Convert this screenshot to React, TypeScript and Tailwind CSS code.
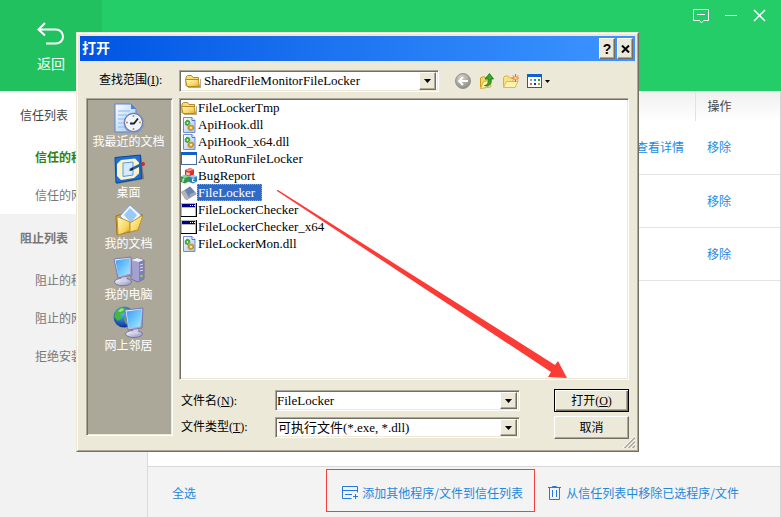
import type { ReactNode } from 'react';

const raised =
  'border border-t-white border-l-white border-r-[#716f64] border-b-[#716f64] bg-[#ece9d8] shadow-[inset_-1px_-1px_#aca899]';
const sunken =
  'border border-t-[#aca899] border-l-[#aca899] border-r-white border-b-white shadow-[inset_1px_1px_#716f64,inset_-1px_-1px_#ece9d8]';
const dialogText = "font-['Liberation_Serif','Noto_Sans_CJK_SC',serif] text-black";

function Defs() {
  return (
    <svg width="0" height="0" className="absolute" aria-hidden="true">
      <defs>
        <linearGradient id="folder" x1="0" y1="0" x2="1" y2="1">
          <stop offset="0" stopColor="#fffbc4" />
          <stop offset="0.6" stopColor="#f9d866" />
          <stop offset="1" stopColor="#d9a32c" />
        </linearGradient>
        <linearGradient id="screen" x1="0" y1="0" x2="1" y2="1">
          <stop offset="0" stopColor="#3d9bf5" />
          <stop offset="0.5" stopColor="#6cc4ff" />
          <stop offset="1" stopColor="#a9ecff" />
        </linearGradient>
        <linearGradient id="shell" x1="0" y1="0" x2="1" y2="1">
          <stop offset="0" stopColor="#ffffff" />
          <stop offset="1" stopColor="#8f8fc4" />
        </linearGradient>
        <linearGradient id="paper" x1="0" y1="0" x2="1" y2="1">
          <stop offset="0" stopColor="#ffffff" />
          <stop offset="1" stopColor="#9cc6f6" />
        </linearGradient>
        <radialGradient id="globe" cx="0.4" cy="0.3" r="0.7">
          <stop offset="0" stopColor="#5fb8ff" />
          <stop offset="1" stopColor="#0a2f9c" />
        </radialGradient>
        <radialGradient id="grayball" cx="0.4" cy="0.3" r="0.7">
          <stop offset="0" stopColor="#d6d5cf" />
          <stop offset="1" stopColor="#8d8c86" />
        </radialGradient>
      </defs>
    </svg>
  );
}

function Svg({ size, children }: { size: 16 | 32; children: ReactNode }) {
  return (
    <svg width={size} height={size} viewBox={`0 0 ${size} ${size}`} className="shrink-0" aria-hidden="true">
      {children}
    </svg>
  );
}

const FolderIcon = () => (
  <Svg size={16}>
    <path d="M1 13V4l1.500-1.500h4L8 4.500h5.500V7" fill="#f8dd7c" stroke="#b98b1e" />
    <path d="M.5 6.500h12.500l1.500 7H2z" fill="url(#folder)" stroke="#b98b1e" />
    <path d="M15.500 6v8.500H3" fill="none" stroke="#6b5a2a" strokeOpacity=".5" />
  </Svg>
);

const DllIcon = () => (
  <Svg size={16}>
    <path d="M2.500.5h8.500l3 3v12H2.500z" fill="url(#paper)" stroke="#6f8fd0" />
    <path d="M11 .5v3h3" fill="#fff" stroke="#4e73c4" />
    <path d="M4 5l2-2 2.500 1L9 6.500 7 8.500 4.500 8z" fill="#45ab35" stroke="#2d8a22" strokeWidth=".6" />
    <circle cx="6.500" cy="6" r=".9" fill="#d9f5c4" />
    <path d="M7 9.500l2-1.500 3 .5 1 2.500-1.500 2-3 .5L7 12z" fill="#d9a02c" stroke="#a9751a" strokeWidth=".6" />
    <circle cx="10" cy="10.800" r="1.100" fill="#fff0b8" />
  </Svg>
);

const WindowIcon = () => (
  <Svg size={16}>
    <rect x=".5" y="1.500" width="15" height="12" fill="#fff" stroke="#456a9c" />
    <rect x="0" y="1" width="16" height="3" fill="#1360c9" />
  </Svg>
);

const ConsoleIcon = () => (
  <Svg size={16}>
    <rect x="0" y="1" width="16" height="14" fill="#000" />
    <rect x="0" y="1" width="15" height="13" fill="#b8b8b8" />
    <rect x="1" y="2" width="13" height="3" fill="#000084" />
    <path d="M9 3h1v1H9zM11 3h1v1h-1zM13 3h1v1h-1z" fill="#fff" />
    <rect x="1" y="6" width="13" height="8" fill="#fff" />
  </Svg>
);

const BlocksIcon = () => (
  <Svg size={16}>
    <path d="M4 2l5-2 4 1.500v5L8 8.500 4 7z" fill="#d92f2f" />
    <path d="M4 2l5-2 4 1.500L8 3.500z" fill="#f58d80" />
    <path d="M0 8.500l4-1.500 4 1.500v5L4 15.500 0 14z" fill="#2f9a48" />
    <path d="M0 8.500l4-1.500 4 1.500-4 1.500z" fill="#8ed79a" />
    <path d="M8 8.500l4-1.500 4 1.500v5l-4 2-4-1.500z" fill="#2c80c4" />
    <path d="M8 8.500l4-1.500 4 1.500-4 1.500z" fill="#94cbf2" />
    <path d="M6 4v3M8 4.500v3M6 6h2M2 11v3M2 11h1.500M13.500 11h-2v2.500h2" stroke="#fff" fill="none" />
  </Svg>
);

const LockerIcon = () => (
  <Svg size={16}>
    <path d="M0 7 9 1.500 15.500 9 6 15 4 14z" fill="#8b98ad" />
    <path d="M0 7l4-1.500L8 13l-2 2-2-1z" fill="#b9b3b8" />
    <path d="M4 5.500 9 1.500 14 7l-6 5z" fill="#6685b4" />
    <path d="M9 9l5-2 1.500 2L8 13z" fill="#9ca4b5" />
  </Svg>
);

const RecentIcon = () => (
  <Svg size={32}>
    <path d="M2 2h16l5 5v23H2z" fill="url(#paper)" stroke="#5682d8" />
    <path d="M18 2v5h5z" fill="#4484e8" />
    <path d="M5 9h12M5 13h9M5 17h7M5 21h7M5 25h8" stroke="#a5c7f2" strokeWidth="1.500" />
    <circle cx="21" cy="21" r="10.500" fill="#8f9cb8" />
    <circle cx="20.500" cy="20.500" r="9" fill="#eef5ff" stroke="#5275b5" />
    <path d="M20.500 13v2M20.500 26v2M13 20.500h2M26 20.500h2" stroke="#e67b39" strokeWidth="1.500" />
    <path d="M17 21.500h4l4-5" stroke="#222" strokeWidth="1.800" fill="none" />
  </Svg>
);

const DesktopIcon = () => (
  <Svg size={32}>
    <path d="M3 5 28 2l3 24-27 5z" fill="#444" fillOpacity=".5" />
    <path d="M2 4.500 27.500 2l1 23.500L3 30z" fill="#1d6fd4" stroke="#0b459e" />
    <path d="M8 7l14-1.500 4 4v11L21 25 8 27l-4-4V11z" fill="#fff4c9" />
    <path d="M10 10l10-1v13l-10 1.500z" fill="#d4ebff" stroke="#4e9ce8" />
    <path d="M17 17l12-6" stroke="#2d5b9e" strokeWidth="2.600" />
    <path d="M15.500 17.500 20 14.500v2.500z" fill="#222" />
    <circle cx="30" cy="11" r="2" fill="#d02b1c" />
  </Svg>
);

const DocumentsIcon = () => (
  <Svg size={32}>
    <path d="M3 12l6-2 15 4 5-4-4 16L4 31z" fill="#e4ac28" stroke="#9e7418" />
    <path d="M7 12 17 1l11 10-9 13z" fill="#eef6ff" stroke="#7aa9e4" />
    <path d="M11 11l6-7 7 7-6 8z" fill="#9bc9f6" />
    <path d="M4 12.500 17 18v9L5 31z" fill="url(#folder)" stroke="#c3902a" />
    <path d="M17 19 30 11l-5 15-8 2z" fill="url(#folder)" stroke="#c3902a" />
  </Svg>
);

const ComputerIcon = () => (
  <Svg size={32}>
    <path d="M18 5l6-2 7 2v19l-6 3-7-3z" fill="#a3a2cf" stroke="#74739e" />
    <path d="M18 5l6-2 7 2-5 2z" fill="#eeeef9" />
    <path d="M26 7v20l5-3V5z" fill="#7f7eb2" />
    <path d="M27 10l3-1M27 13l3-1M27 16l3-1" stroke="#e0e0f2" />
    <circle cx="28.500" cy="21" r="1.200" fill="#7de84b" />
    <ellipse cx="10" cy="27" rx="8.500" ry="3.800" fill="url(#shell)" stroke="#77769d" />
    <path d="M8 21h5l1 6H8z" fill="#d0cfe9" />
    <path d="M1 4 18 2l1 18L5 23z" fill="url(#shell)" stroke="#7b7aa8" />
    <path d="M2.500 5.500 16.500 3.500 17 18.500 5.500 21z" fill="url(#screen)" />
  </Svg>
);

const NetworkIcon = () => (
  <Svg size={32}>
    <circle cx="11" cy="11" r="10.500" fill="url(#globe)" />
    <path d="M3 5l5-4 5 2-2 4-4 1 2 4-4 3-4-4zM11 12l5-3 3 3-4 7-3-2z" fill="#43b83d" />
    <path d="M5 5l4-3 2 2-4 2z" fill="#a5e877" />
    <ellipse cx="21" cy="28" rx="8.500" ry="3.500" fill="url(#shell)" stroke="#77769d" />
    <path d="M20 22h5v6h-5z" fill="#d0cfe9" />
    <path d="M12 4 30 2l-1 20-14 2z" fill="url(#shell)" stroke="#7b7aa8" />
    <path d="M13.500 5.500 28.500 3.500 27.500 20.500 16 22z" fill="url(#screen)" />
  </Svg>
);

const DownArrow = () => (
  <svg width="7" height="4" viewBox="0 0 7 4" aria-hidden="true">
    <path d="M0 0h7L3.500 4z" fill="#000" />
  </svg>
);

const places: [string, () => ReactNode][] = [
  ['我最近的文档', RecentIcon],
  ['桌面', DesktopIcon],
  ['我的文档', DocumentsIcon],
  ['我的电脑', ComputerIcon],
  ['网上邻居', NetworkIcon],
];

const files: [string, () => ReactNode][] = [
  ['FileLockerTmp', FolderIcon],
  ['ApiHook.dll', DllIcon],
  ['ApiHook_x64.dll', DllIcon],
  ['AutoRunFileLocker', WindowIcon],
  ['BugReport', BlocksIcon],
  ['FileLocker', LockerIcon],
  ['FileLockerChecker', ConsoleIcon],
  ['FileLockerChecker_x64', ConsoleIcon],
  ['FileLockerMon.dll', DllIcon],
];

function OpenDialog() {
  return (
    <section
      role="dialog"
      aria-label="打开"
      className={`absolute top-8 left-[76px] w-[563px] border border-t-[#ece9d8] border-l-[#ece9d8] border-r-[#716f64] border-b-[#716f64] text-xs ${dialogText}`}
    >
      <div className="relative border border-t-white border-l-white border-r-[#aca899] border-b-[#aca899] bg-[#ece9d8] p-0.5">
        <div className="flex h-[25px] items-center gap-0.5 bg-linear-to-r from-[#0054e3] to-[#3d95ff] px-0.5">
          <h1 className="flex-1 text-sm leading-5 font-bold text-white">打开</h1>
          <button aria-label="帮助" className={`flex h-[21px] w-4 items-center justify-center font-['Liberation_Sans',sans-serif] text-sm leading-4 font-bold ${raised}`}>
            ?
          </button>
          <button aria-label="关闭" className={`flex h-[21px] w-4 items-center justify-center ${raised}`}>
            <svg width="9" height="8" viewBox="0 0 9 8" aria-hidden="true">
              <path d="M1 .5l7 7M8 .5l-7 7" stroke="#000" strokeWidth="2" />
            </svg>
          </button>
        </div>

        <div className="mt-[9px] flex items-center pl-[19px]">
          <label htmlFor="folder-select" className="w-20 pb-0.5">
            查找范围(<u>I</u>):
          </label>
          <div className={`flex h-[22px] w-[260px] items-center bg-white p-0.5 pl-[5px] ${sunken}`}>
            <FolderIcon />
            <select id="folder-select" className="min-w-0 flex-1 appearance-none bg-white pl-[3px] text-[13px] leading-4 outline-none">
              <option>SharedFileMonitorFileLocker</option>
            </select>
            <span className={`flex h-[18px] w-[17px] items-center justify-center ${raised}`}>
              <DownArrow />
            </span>
          </div>
          <div className="ml-4 flex items-center gap-2">
            <button aria-label="后退">
              <Svg size={16}>
                <circle cx="8" cy="8" r="7.500" fill="url(#grayball)" stroke="#94938c" />
                <path d="M13 8H4M8 4 4 8l4 4" stroke="#fff" strokeWidth="1.800" fill="none" />
              </Svg>
            </button>
            <button aria-label="向上一级">
              <Svg size={16}>
                <path d="M1.500 14V5l3-1.500 2 1 5-1v9" fill="#f5d765" stroke="#c89a20" />
                <path d="M1.500 15.500l3-7 8-1.500-1 7z" fill="#fff2a3" stroke="#d5ad35" />
                <path d="M5.500 12.500c3 0 4-3 3.800-6.500H6L10.500.5 14.500 6h-2.500c.5 5-2 8.500-6.500 6.500z" fill="#39a82d" stroke="#17721a" strokeWidth=".8" />
              </Svg>
            </button>
            <button aria-label="新建文件夹">
              <Svg size={16}>
                <path d="M.5 4.500 2 3h3l1.500 2h6v9h-12z" fill="#f9e08a" stroke="#dcb043" />
                <path d="M.5 14.500l3-6h11.500l-3 6z" fill="#fff3ad" stroke="#e0b84f" />
                <path d="M12.500 1v8M8.500 5h7.500M10 2.500l5 5M15 2.500l-5 5" stroke="#f0542c" />
                <circle cx="12.500" cy="5" r="1.500" fill="#ffd66b" />
              </Svg>
            </button>
            <button aria-label="查看菜单" className="flex items-center gap-0.5">
              <Svg size={16}>
                <rect x=".5" y="1.500" width="14" height="13" fill="#fff" stroke="#0a5fc9" />
                <path d="M0 1h15v3H0z" fill="#0a62d6" />
                <path d="M3 6h2v2H3z" fill="#9b9bc0" />
                <path d="M7 6h2v2H7z" fill="#2a7de0" />
                <path d="M11 6h2v2h-2z" fill="#2c9a36" />
                <path d="M3 10h2v2H3z" fill="#e8672a" />
                <path d="M7 10h2v2H7z" fill="#1b2f9c" />
                <path d="M11 10h2v2h-2z" fill="#b9a02c" />
              </Svg>
              <svg width="5" height="3" viewBox="0 0 5 3" aria-hidden="true">
                <path d="M0 0h5L2.500 3z" />
              </svg>
            </button>
          </div>
        </div>

        <div className="mt-1.5 flex items-start gap-1.5 px-1.5 pb-[9px]">
          <nav className={`h-[338px] w-[87px] shrink-0 bg-[#aca899] pt-[3px] pr-0.5 ${sunken}`}>
            {places.map(([name, Icon]) => (
              <button key={name} className="flex h-[51px] w-full flex-col items-center whitespace-nowrap text-white">
                <Icon />
                <span className="leading-4">{name}</span>
              </button>
            ))}
          </nav>

          <div className="min-w-0 flex-1">
            <ul className={`h-[282px] bg-white px-px text-[13px] leading-[15px] ${sunken}`}>
              {files.map(([name, Icon]) => (
                <li key={name} className="flex h-[17px] items-center">
                  <Icon />
                  {name === 'FileLocker' ? (
                    <span className="border border-dotted border-[#e0953a] bg-[#316ac5] pr-1.5 text-white">{name}</span>
                  ) : (
                    <span className="pl-px">{name}</span>
                  )}
                </li>
              ))}
            </ul>

            <div className="mt-[9px] grid grid-cols-[94px_245px_1fr] items-center gap-y-1 pl-0.5">
              <label htmlFor="file-name">
                文件名(<u>N</u>):
              </label>
              <div className={`flex h-[21px] items-center bg-white p-0.5 pl-px ${sunken}`}>
                <input id="file-name" defaultValue="FileLocker" className="min-w-0 flex-1 text-[13px] leading-4 outline-none" />
                <button aria-label="文件名列表" className={`flex h-[17px] w-[17px] items-center justify-center ${raised}`}>
                  <DownArrow />
                </button>
              </div>
              <button className="h-[23px] w-[75px] justify-self-end border border-black bg-[#ece9d8] shadow-[inset_1px_1px_#fff,inset_-1px_-1px_#716f64,inset_-2px_-2px_#aca899]">
                打开(<u>O</u>)
              </button>
              <label htmlFor="file-type" className="pb-0.5">
                文件类型(<u>T</u>):
              </label>
              <div className={`flex h-[21px] items-center bg-white p-0.5 ${sunken}`}>
                <select id="file-type" className="min-w-0 flex-1 appearance-none bg-white text-[13px] leading-4 outline-none">
                  <option>可执行文件(*.exe, *.dll)</option>
                </select>
                <span className={`flex h-[17px] w-[17px] items-center justify-center ${raised}`}>
                  <DownArrow />
                </span>
              </div>
              <button className={`h-[23px] w-[75px] justify-self-end ${raised}`}>取消</button>
            </div>
          </div>
        </div>

        <svg width="12" height="12" viewBox="0 0 12 12" className="absolute right-0.5 bottom-0.5" aria-hidden="true">
          <path d="M0 12 12 0M4 12l8-8M8 12l4-4" stroke="#fff" />
          <path d="M1.500 12 12 1.500M5.500 12 12 5.500M9.500 12 12 9.500" stroke="#aca899" strokeWidth="1.500" />
        </svg>
      </div>
    </section>
  );
}

function NavGroup({ title, items, current, muted }: { title: string; items: string[]; current?: string; muted?: boolean }) {
  return (
    <div className={muted ? 'flex-1 bg-[#f2f2f2]' : 'bg-white'}>
      <h2 className={`flex h-[47px] items-center pl-5 ${muted ? 'font-bold text-[#777]' : 'text-[#444]'}`}>{title}</h2>
      {items.map((item) => (
        <a key={item} href="#" className={`flex h-[38px] items-center pl-[35px] ${item === current ? 'font-bold text-[#2e8210]' : 'text-[#777]'}`}>
          {item}
        </a>
      ))}
    </div>
  );
}

export default function App() {
  return (
    <div className="relative flex min-h-screen flex-col overflow-hidden bg-white font-['Noto_Sans_CJK_SC',sans-serif] text-xs">
      <Defs />
      <header className="flex h-[91px] justify-between bg-[#24cd67]">
        <button className="flex w-[102px] flex-col items-center bg-[#22c160] pt-[22px] text-sm leading-5 text-white">
          <svg width="28" height="24" viewBox="0 0 28 24" fill="none" stroke="#fff" strokeWidth="2" aria-hidden="true">
            <path d="M8 1 1.500 7.500 8 13.500M1.500 7.500H19a7 7 0 0 1 0 14H9" />
          </svg>
          <span className="mt-[7px]">返回</span>
        </button>
        <div className="flex items-start gap-4 pt-2 pr-[15px]">
          <button aria-label="反馈">
            <svg width="16" height="16" viewBox="0 0 16 16" fill="none" stroke="#fff" aria-hidden="true">
              <path d="M.5 1.500h15v11h-5L8.500 15l-2-2.500h-6zM4 6.500h8" />
            </svg>
          </button>
          <button aria-label="最小化">
            <svg width="12" height="16" viewBox="0 0 12 16" stroke="#fff" aria-hidden="true">
              <path d="M0 7.500h12" />
            </svg>
          </button>
          <button aria-label="关闭窗口">
            <svg width="13" height="16" viewBox="0 0 13 16" stroke="#fff" strokeWidth="1.500" aria-hidden="true">
              <path d="M1 2l11 11M12 2 1 13" />
            </svg>
          </button>
        </div>
      </header>

      <div className="flex flex-1">
        <aside className="flex w-[148px] shrink-0 flex-col border-r border-[#dadada]">
          <NavGroup title="信任列表" items={['信任的程序', '信任的网址']} current="信任的程序" />
          <NavGroup title="阻止列表" items={['阻止的程序', '阻止的网址', '拒绝安装']} muted />
        </aside>

        <main className="flex min-w-0 flex-1 flex-col border-r border-[#d5d5d5]">
          <table className="w-full table-fixed border-collapse text-left">
            <colgroup>
              <col />
              <col className="w-[59px]" />
              <col className="w-[85px]" />
            </colgroup>
            <thead>
              <tr className="h-[30px] bg-linear-to-b from-[#f0f0f0] to-white">
                <td />
                <td className="border-r border-[#e2e2e2]" />
                <th className="pl-3 font-normal text-[#444]">操作</th>
              </tr>
            </thead>
            <tbody className="text-[#1e88dd]">
              {[0, 1, 2].map((row) => (
                <tr key={row} className="h-[53px] border-b border-[#e4e4e4]">
                  <td />
                  <td>{row === 0 && <a href="#">查看详情</a>}</td>
                  <td className="pl-3">
                    <a href="#">移除</a>
                  </td>
                </tr>
              ))}
            </tbody>
          </table>

          <footer className="mt-auto flex h-[51px] items-start border-t border-[#d8d8d8] bg-[#f3f3f3] pt-0.5 pr-[41px] pl-6 whitespace-nowrap text-[#1e88dd]">
            <button className="h-[43px] pt-1">全选</button>
            <button className="ml-auto flex h-[43px] w-[209px] items-center gap-[3px] border border-[#f5413d] pt-1 pl-[15px]">
              <svg width="17" height="14" viewBox="0 0 17 14" fill="none" stroke="#2378e6" aria-hidden="true">
                <path d="M9.500 12.500H.5V.5h15v6M.5 4.500h15M3 8.500h7M13.500 8v5M11 10.500h5" />
              </svg>
              添加其他程序/文件到信任列表
            </button>
            <button className="ml-[13px] flex h-[43px] items-center gap-[5px] pt-1">
              <svg width="13" height="14" viewBox="0 0 13 14" fill="none" stroke="#2378e6" aria-hidden="true">
                <path d="M0 1.500h13M4.500 1V.5h4V1M1.500 1.500v12h10v-12M4.500 4v7M8.500 4v7" />
              </svg>
              从信任列表中移除已选程序/文件
            </button>
          </footer>
        </main>
      </div>

      <OpenDialog />

      <svg width="291" height="190" viewBox="0 0 291 190" className="pointer-events-none absolute top-[190px] left-[277px]" aria-hidden="true">
        <path d="M0 0 1 0 278 175 281 171 290 188 271 187 274 182 0 1z" fill="#fb3b36" />
      </svg>
    </div>
  );
}
